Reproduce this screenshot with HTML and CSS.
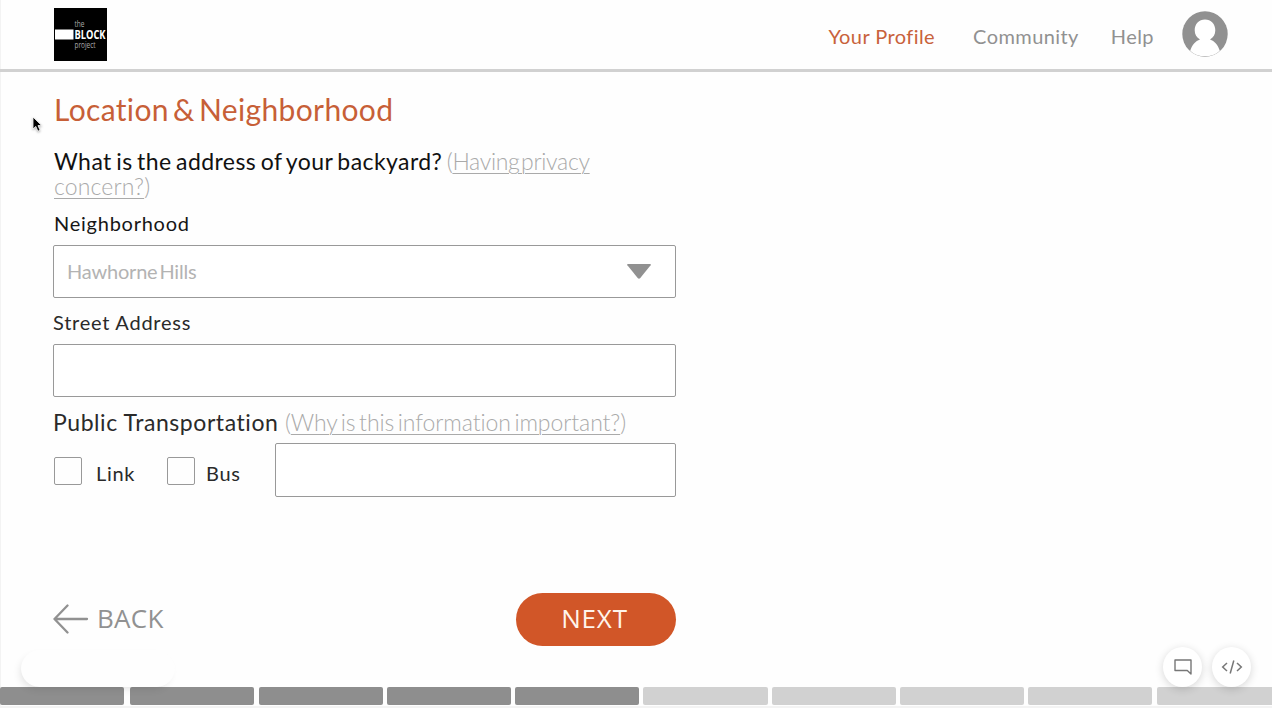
FILE: index.html
```html
<!DOCTYPE html>
<html lang="en">
<head>
<meta charset="utf-8">
<title>The Block Project</title>
<link rel="stylesheet" href="styles.css">
</head>
<body>
<div class="page">
  <header class="header">
    <svg class="logo" width="53" height="53" viewBox="0 0 53 53">
      <rect width="53" height="53" fill="#000"/>
      <rect x="1" y="21.5" width="18.5" height="10" fill="#fff"/>
      <text class="logo-thin" x="20.5" y="18.500" textLength="10" lengthAdjust="spacingAndGlyphs">the</text>
      <text class="logo-bold" x="20.5" y="31.3" textLength="31" lengthAdjust="spacingAndGlyphs">BLOCK</text>
      <text class="logo-thin" x="20.5" y="40" textLength="21" lengthAdjust="spacingAndGlyphs">project</text>
    </svg>
    <nav class="nav">
      <a class="nav-link active">Your Profile</a>
      <a class="nav-link community">Community</a>
      <a class="nav-link help">Help</a>
      <svg class="avatar" width="46" height="46" viewBox="0 0 46 46">
        <circle cx="23" cy="23" r="22.7" fill="#919191"/>
        <path d="M23 8.500c-6 0-10.300 4.500-10.300 10.800 0 4.200 1.900 7.200 5.300 9.200C13.500 30 10 34 8.200 39.700 12 43.500 17 45.300 23 45.300s11-1.800 14.800-5.600C36 34 32.500 30 28 28.500c3.400-2 5.300-5 5.300-9.200C33.300 13 29 8.500 23 8.500z" fill="#fff"/>
      </svg>
    </nav>
  </header>

  <main class="form">
    <h1 class="title">Location &amp; Neighborhood</h1>
    <p class="question">What is the address of your backyard? <span class="hint">(<u>Having privacy</u></span><br><span class="hint concern"><u>concern?</u>)</span></p>
    <label class="label neighborhood">Neighborhood</label>
    <div class="field select">
      <span class="placeholder">Hawhorne Hills</span>
      <svg width="26" height="17" viewBox="0 0 26 17"><path d="M2 1h22q1.500 0 .6 1.300L14.300 15q-1.300 1.400-2.600 0L1.400 2.300Q.5 1 2 1z" fill="#919191"/></svg>
    </div>
    <label class="label street">Street Address</label>
    <div class="field"></div>
    <p class="label transport">Public Transportation <span class="hint why">(<u>Why is this information important?</u>)</span></p>
    <div class="options">
      <span class="box"></span><span class="option link">Link</span>
      <span class="box"></span><span class="option bus">Bus</span>
      <div class="field route"></div>
    </div>
    <div class="actions">
      <a class="back">
        <svg width="36" height="30" viewBox="0 0 36 30" fill="none" stroke="#919191" stroke-width="2.300" stroke-linecap="round" stroke-linejoin="round"><path d="M34 15H1.500M14.500 1.500 1.500 15l13 13.500"/></svg>
        <span>BACK</span>
      </a>
      <button class="next">NEXT</button>
    </div>
  </main>

  <div class="progress">
    <i class="step done first"></i><i class="step done"></i><i class="step done"></i><i class="step done"></i><i class="step done"></i><i class="step"></i><i class="step"></i><i class="step"></i><i class="step"></i><i class="step"></i>
  </div>

  <div class="pill"></div>
  <div class="tools">
    <span class="tool"><svg width="18" height="16" viewBox="0 0 18 16" fill="none" stroke="#777" stroke-width="1.400" stroke-linejoin="round"><path d="M1 1h16v14l-3.700-3.500H1z"/></svg></span>
    <span class="tool"><svg width="22" height="14" viewBox="0 0 22 14" fill="none" stroke="#777" stroke-width="1.500"><path d="M6 3 1.700 7 6 11M16 3l4.300 4L16 11M12.800.5 9.200 13.500"/></svg></span>
  </div>
  <svg class="cursor" width="12" height="18" viewBox="0 0 12 18"><path d="M1 1v12l2.800-2.600 2.100 4.800 2.200-1-2.100-4.600h3.700z" fill="#000" stroke="#fff" stroke-width=".8"/></svg>
</div>
</body>
</html>
```
FILE: styles.css
```css
* { box-sizing: border-box; }
body { margin: 0; background: #fefefe; font-family: Lato, "Open Sans", sans-serif; color: #2a2a2a; }
.page { position: relative; display: flex; flex-direction: column; height: 708px; padding-bottom: 2px; overflow: hidden; box-shadow: inset 1px 0 #f3f3f3, inset 0 -2px #f3f3f3; }

.header { display: flex; flex: none; justify-content: space-between; align-items: flex-start; height: 72px; padding: 8px 44px 0 54px; border-bottom: 3px solid #d1d1d1; }
.logo { display: block; }
.logo-thin { font: 9.5px "Open Sans", sans-serif; fill: #aaa; }
.logo-bold { font: bold 13px "Open Sans", sans-serif; fill: #fff; }
.nav { display: flex; align-items: center; padding-top: 3px; color: #919191; font-size: 20px; }
.nav-link { line-height: 24px; padding-top: 3px; letter-spacing: .42px; }
.active { color: #c8623b; }
.community { margin-left: 38px; }
.help { margin-left: 32px; }
.avatar { margin-left: 28px; }

.form { display: flex; flex: none; flex-direction: column; width: 676px; padding: 19px 0 0 53px; }
.title { margin: 0 0 0 1px; color: #c75f37; font-size: 30px; font-weight: 400; line-height: 36px; letter-spacing: .35px; word-spacing: -3.8px; }
.question { margin: 22px 0 0 1px; color: #111; font-size: 23px; line-height: 25px; letter-spacing: .42px; word-spacing: -1.8px; white-space: nowrap; }
.hint { color: #aaa; font-weight: 300; letter-spacing: -.3px; word-spacing: -4.500px; }
.hint u { text-decoration-thickness: 1px; text-underline-offset: 3px; }
.concern { letter-spacing: .15px; }
.label { margin: 12px 0 10px 1px; font-size: 20px; line-height: 24px; letter-spacing: .75px; }
.neighborhood { color: #161616; }
.street { margin-top: 12px; margin-left: 0; }
.transport { margin: 12px 0 8px; font-size: 23px; line-height: 26px; letter-spacing: .57px; white-space: nowrap; }
.why { letter-spacing: -.08px; word-spacing: -2.600px; }
.field { height: 53px; border: 1px solid #999; border-radius: 2px; background: #fff; }
.select { display: flex; align-items: center; justify-content: space-between; padding: 0 23px 0 13px; }
.placeholder { padding-bottom: 2px; color: #b3b3b3; font-size: 20px; letter-spacing: -.2px; word-spacing: -3px; }
.options { display: flex; align-items: center; height: 54px; }
.box { width: 28px; height: 28px; margin: 2px 0 0 1px; border: 1px solid #999; border-radius: 2px; }
.option { padding-top: 5px; font-size: 20px; letter-spacing: .7px; }
.link { width: 84px; padding-left: 14px; }
.bus { width: 80px; padding-left: 11px; }
.route { flex: 1; height: 54px; }
.actions { display: flex; justify-content: space-between; align-items: center; height: 53px; margin-top: 96px; font-family: "Open Sans", sans-serif; font-size: 26px; }
.back { display: flex; align-items: center; gap: 8px; padding-bottom: 2px; color: #919191; letter-spacing: .3px; }
.back span { margin-top: -2px; }
.next { width: 160px; height: 53px; padding: 0 3px 3px 0; border: 0; border-radius: 27px; background: #d15628; color: #fff4eb; font: inherit; letter-spacing: .8px; }

.progress { display: flex; flex: none; gap: 4.100px; height: 18px; margin-top: auto; margin-bottom: 1px; }
.step { flex: none; width: 124.2px; background: #d1d1d1; border-radius: 2px; }
.done { background: #8e8e8e; }
.first { margin-right: 2px; }

.pill { position: absolute; left: 21px; top: 650px; width: 154px; height: 37px; border-radius: 19px; background: #fefefe; box-shadow: -3px 4px 8px -3px rgba(0, 0, 0, .13); }
.tools { position: absolute; right: 21px; top: 647px; display: flex; gap: 10px; }
.tool { display: flex; align-items: center; justify-content: center; width: 39px; height: 40px; border-radius: 50%; background: #fff; box-shadow: 0 2px 8px rgba(0, 0, 0, .16); }
.cursor { position: absolute; left: 32px; top: 116px; filter: drop-shadow(0 1px 1px rgba(0, 0, 0, .3)); }
```
